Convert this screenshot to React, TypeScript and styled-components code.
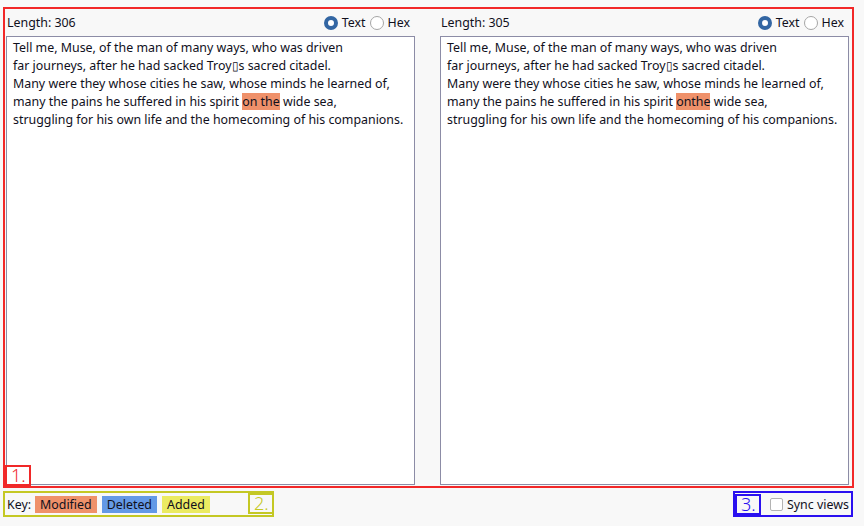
import React from "react";
import styled, { createGlobalStyle } from "styled-components";

const GlobalStyle = createGlobalStyle`
  html, body {
    margin: 0;
    padding: 0;
    background: #f8f8f8;
  }
  body {
    font-family: "Noto Sans", "Open Sans", "Liberation Sans", sans-serif;
    font-size: 12.4px;
    color: #10101c;
  }
`;

interface Segment {
  text: string;
  kind?: "modified" | "deleted" | "added";
}

interface PaneData {
  length: number;
  lines: Segment[][];
}

const makeLines = (changed: string): Segment[][] => [
  [{ text: "Tell me, Muse, of the man of many ways, who was driven" }],
  [{ text: "far journeys, after he had sacked Troy\u25AFs sacred citadel." }],
  [{ text: "Many were they whose cities he saw, whose minds he learned of," }],
  [
    { text: "many the pains he suffered in his spirit " },
    { text: changed, kind: "modified" },
    { text: " wide sea," },
  ],
  [{ text: "struggling for his own life and the homecoming of his companions." }],
];

const panes: PaneData[] = [
  { length: 306, lines: makeLines("on the") },
  { length: 305, lines: makeLines("onthe") },
];

function App() {
  return (
    <>
      <GlobalStyle />
      <Page>
        <ComparePanel>
          {panes.map((pane, i) => (
            <Pane key={i}>
              <PaneHeader>
                <span>Length: {pane.length}</span>
                <RadioGroup>
                  <RadioOption>
                    <Radio $checked />
                    Text
                  </RadioOption>
                  <RadioOption>
                    <Radio />
                    Hex
                  </RadioOption>
                </RadioGroup>
              </PaneHeader>
              <TextView>
                {pane.lines.map((line, j) => (
                  <Line key={j}>
                    {line.map((seg, k) =>
                      seg.kind ? (
                        <Mark key={k} $kind={seg.kind}>
                          {seg.text}
                        </Mark>
                      ) : (
                        <span key={k}>{seg.text}</span>
                      )
                    )}
                  </Line>
                ))}
              </TextView>
            </Pane>
          ))}
          <Marker $color="#f02828" style={{ left: 0, bottom: 0 }}>
            1.
          </Marker>
        </ComparePanel>
        <Footer>
          <KeyBox>
            <span>Key:</span>
            <Badge $kind="modified">Modified</Badge>
            <Badge $kind="deleted">Deleted</Badge>
            <Badge $kind="added">Added</Badge>
            <Marker $color="#c4c824" style={{ right: -2, top: 0 }}>
              2.
            </Marker>
          </KeyBox>
          <SyncBox>
            <Marker $color="#2a10f0" style={{ left: 0, top: 1 }}>
              3.
            </Marker>
            <Checkbox />
            <span>Sync views</span>
          </SyncBox>
        </Footer>
      </Page>
    </>
  );
}

const kindColors: Record<string, string> = {
  modified: "#ef916a",
  deleted: "#6499e6",
  added: "#ebeb62",
};

const Page = styled.div`
  width: 864px;
  height: 526px;
  box-sizing: border-box;
  padding: 7px 10px 0 3px;
  display: flex;
  flex-direction: column;
`;

const ComparePanel = styled.div`
  position: relative;
  height: 481px;
  box-sizing: border-box;
  border: 2px solid #f22828;
  padding: 0 3px 1px 1px;
  display: grid;
  grid-template-columns: 409px 409px;
  column-gap: 25px;
`;

const Pane = styled.div`
  display: flex;
  flex-direction: column;
  min-height: 0;
`;

const PaneHeader = styled.div`
  height: 27px;
  flex: none;
  display: flex;
  align-items: center;
  justify-content: space-between;
  padding: 0 5px 0 1px;
`;

const RadioGroup = styled.div`
  display: flex;
  align-items: center;
  gap: 4px;
`;

const RadioOption = styled.label`
  display: flex;
  align-items: center;
  gap: 4px;
`;

const Radio = styled.span<{ $checked?: boolean }>`
  width: 14px;
  height: 14px;
  box-sizing: border-box;
  border-radius: 50%;
  background: #fff;
  border: ${(p) => (p.$checked ? "4.5px solid #3366a3" : "1px solid #a6a6a6")};
`;

const TextView = styled.div`
  flex: 1;
  background: #fff;
  border: 1px solid #8c8ca6;
  padding: 1px 6px;
  overflow: hidden;
`;

const Line = styled.div`
  display: flex;
  align-items: center;
  height: 18px;
  white-space: pre;
`;

const Mark = styled.span<{ $kind: string }>`
  height: 17px;
  line-height: 17px;
  margin-top: 1px;
  background: ${(p) => kindColors[p.$kind]};
`;

const Marker = styled.div<{ $color: string }>`
  position: absolute;
  width: 26px;
  height: 21px;
  box-sizing: border-box;
  border: 2px solid ${(p) => p.$color};
  color: ${(p) => p.$color};
  font-size: 18px;
  font-weight: 300;
  line-height: 17px;
  padding-left: 4px;
`;

const Footer = styled.div`
  margin-top: 3px;
  display: flex;
  justify-content: space-between;
  align-items: flex-start;
`;

const AnnotatedBox = styled.div`
  position: relative;
  height: 26px;
  box-sizing: border-box;
  display: flex;
  align-items: center;
`;

const KeyBox = styled(AnnotatedBox)`
  width: 271px;
  border: 2px solid #c4c824;
  padding-left: 2px;
  gap: 5px;
  & > span:first-child {
    margin-right: -1px;
  }
`;

const Badge = styled.span<{ $kind: string }>`
  background: ${(p) => kindColors[p.$kind]};
  height: 17px;
  line-height: 17px;
  padding: 0 5px;
`;

const SyncBox = styled(AnnotatedBox)`
  width: 120px;
  margin-right: 1px;
  border: 2px solid #2a10f0;
  padding-left: 35px;
  gap: 4px;
`;

const Checkbox = styled.span`
  width: 13px;
  height: 13px;
  box-sizing: border-box;
  border: 1px solid #b3b3b3;
  border-radius: 2px;
  background: #fff;
`;

export default App;
